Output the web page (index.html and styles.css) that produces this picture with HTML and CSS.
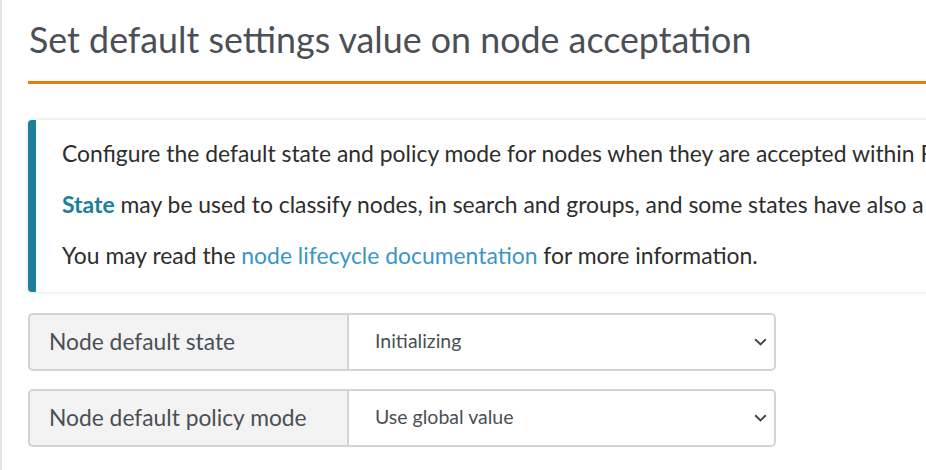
FILE: index.html
```html
<!DOCTYPE html>
<html>
<head>
<meta charset="utf-8">
<link rel="stylesheet" href="styles.css">
</head>
<body>
<div class="page">
  <div class="content">
    <h1 class="title">Set default settings value on node acceptation</h1>
    <div class="callout">
      <p>Configure the default state and policy mode for nodes when they are accepted within Rudder.</p>
      <p><b class="accent">State</b> may be used to classify nodes, in search and groups, and some states have also a special meaning.</p>
      <p>You may read the <a class="link" href="#">node lifecycle documentation</a> for more information.</p>
    </div>
    <div class="form">
      <div class="field">
        <div class="field-label">Node default state</div>
        <div class="field-select"><span>Initializing</span>
          <svg class="chev" width="13" height="8" viewBox="0 0 13 8"><path d="M1.2 1.2 L6.5 6.4 L11.8 1.2" fill="none" stroke="#444" stroke-width="1.9"/></svg>
        </div>
      </div>
      <div class="field">
        <div class="field-label">Node default policy mode</div>
        <div class="field-select"><span>Use global value</span>
          <svg class="chev" width="13" height="8" viewBox="0 0 13 8"><path d="M1.2 1.2 L6.5 6.4 L11.8 1.2" fill="none" stroke="#444" stroke-width="1.9"/></svg>
        </div>
      </div>
    </div>
  </div>
</div>
</body>
</html>
```
FILE: styles.css
```css
html, body {
  margin: 0;
  padding: 0;
  background: #fff;
  overflow: hidden;
}
.page {
  width: 1100px;
  height: 470px;
  border-left: 2px solid #e3e3e3;
  padding-left: 26px;
  box-sizing: border-box;
  font-family: "Lato", "Open Sans", sans-serif;
}
.content {
  width: 1000px;
}
.title {
  margin: 0;
  padding-top: 18px;
  height: 63px;
  font-size: 35.8px;
  font-weight: 400;
  color: #4b5056;
  border-bottom: 3px solid #e67e08;
  line-height: 44px;
  padding-left: 1px;
  box-sizing: content-box;
}
.callout {
  margin-top: 36px;
  height: 172px;
  box-sizing: border-box;
  border-left: 8px solid #1b809e;
  border-radius: 4px;
  box-shadow: 0 0 3px 1px rgba(0,0,0,0.1);
  padding: 8px 26px 0;
  color: #2d2d2d;
  font-size: 22.9px;
  white-space: nowrap;
  overflow: hidden;
}
.callout p {
  margin: 0;
  line-height: 51px;
}
.accent {
  color: #1b809e;
  font-weight: 700;
}
.link {
  color: #3a95c9;
  text-decoration: none;
}
.form {
  margin-top: 21px;
  display: flex;
  flex-direction: column;
  gap: 18px;
}
.field {
  display: flex;
  width: 748px;
  height: 58px;
}
.field-label {
  width: 319px;
  box-sizing: border-box;
  background: #f3f3f3;
  border: 2px solid #d4d4d4;
  border-right: none;
  border-radius: 5px 0 0 5px;
  padding: 0 0 3px 19px;
  display: flex;
  align-items: center;
  font-size: 22.8px;
  color: #4b4f55;
}
.field-select {
  flex: 1;
  box-sizing: border-box;
  border: 2px solid #d4d4d4;
  border-radius: 0 5px 5px 0;
  padding: 0 7px 3px 26px;
  display: flex;
  align-items: center;
  justify-content: space-between;
  font-size: 19.5px;
  color: #4b4f55;
}
.chev {
  display: block;
  margin-top: 2px;
}
```
